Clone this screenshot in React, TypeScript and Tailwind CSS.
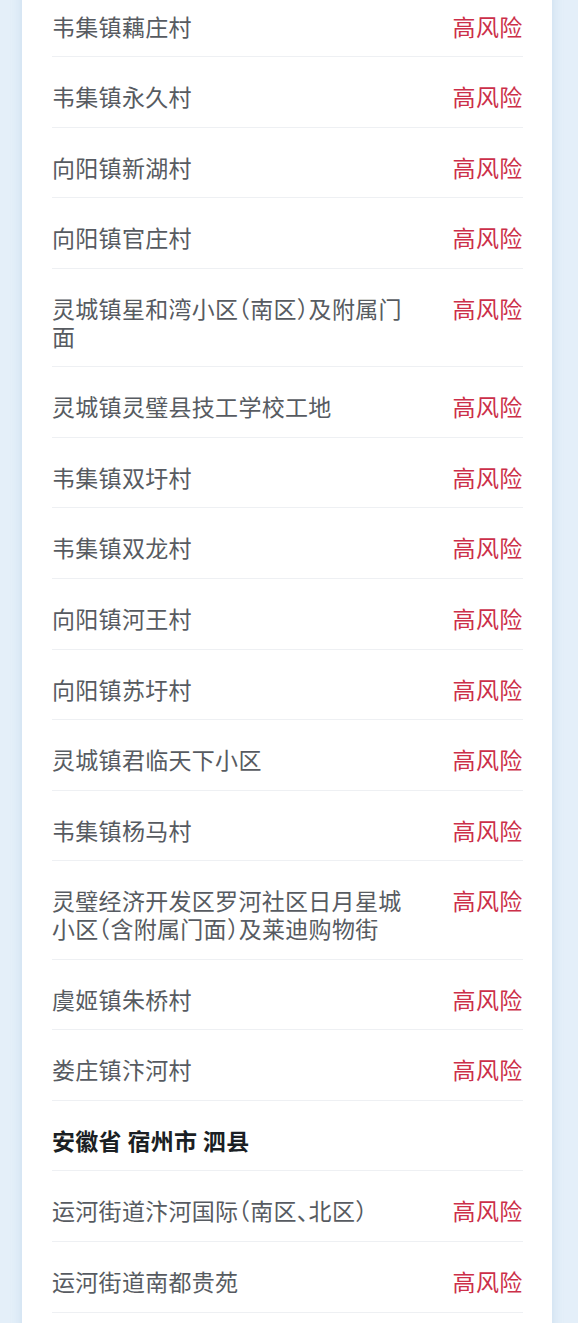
type Row = { name: string; level?: string; header?: boolean };

const rows: Row[] = [
  { name: '韦集镇藕庄村', level: '高风险' },
  { name: '韦集镇永久村', level: '高风险' },
  { name: '向阳镇新湖村', level: '高风险' },
  { name: '向阳镇官庄村', level: '高风险' },
  { name: '灵城镇星和湾小区（南区）及附属门面', level: '高风险' },
  { name: '灵城镇灵璧县技工学校工地', level: '高风险' },
  { name: '韦集镇双圩村', level: '高风险' },
  { name: '韦集镇双龙村', level: '高风险' },
  { name: '向阳镇河王村', level: '高风险' },
  { name: '向阳镇苏圩村', level: '高风险' },
  { name: '灵城镇君临天下小区', level: '高风险' },
  { name: '韦集镇杨马村', level: '高风险' },
  { name: '灵璧经济开发区罗河社区日月星城小区（含附属门面）及莱迪购物街', level: '高风险' },
  { name: '虞姬镇朱桥村', level: '高风险' },
  { name: '娄庄镇汴河村', level: '高风险' },
  { name: '安徽省 宿州市 泗县', header: true },
  { name: '运河街道汴河国际（南区、北区）', level: '高风险' },
  { name: '运河街道南都贵苑', level: '高风险' },
];

export default function App() {
  return (
    <div className="h-[1323px] overflow-hidden bg-[#e4eff9] pl-[22px] pr-[26px] font-['Noto_Sans_CJK_SC','Noto_Sans',sans-serif] [font-feature-settings:'halt']">
      {/* white card, top is cut off by the screenshot */}
      <div className="-mt-[13.3px] min-h-[1400px] bg-white pl-[30px] pr-[29.5px] shadow-[0_0_10px_rgba(150,185,220,0.35)]">
        {rows.map((r, i) => (
          <div
            key={i}
            className="flex items-start gap-[36px] border-b border-[#eef0f3] pt-[26px] pb-[16px] text-[23px] leading-[27.6px] tracking-[0.3px]"
          >
            {r.header ? (
              <div className="flex-1 font-bold text-[#1b1f24]">{r.name}</div>
            ) : (
              <>
                <div className="min-w-0 flex-1 text-[#575b61]">{r.name}</div>
                <div className="shrink-0 text-[#cc2f49]">{r.level}</div>
              </>
            )}
          </div>
        ))}
      </div>
    </div>
  );
}
